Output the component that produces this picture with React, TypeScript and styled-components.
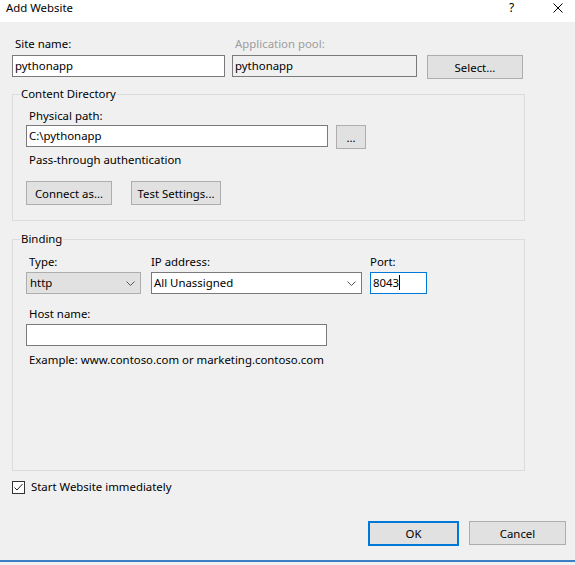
import React from 'react'
import styled, { createGlobalStyle, css } from 'styled-components'

const GlobalStyle = createGlobalStyle`
	html, body {
		margin: 0;
		padding: 0;
		background: #f0f0f0;
	}
	body {
		font-family: 'Noto Sans', 'Segoe UI', sans-serif;
		font-size: 11.4px;
		color: #000;
	}
`

const Window = styled.div`
	width: 575px;
	height: 562px;
	box-sizing: border-box;
	display: flex;
	flex-direction: column;
	background: #f0f0f0;
	border-bottom: 2px solid #3b7fc4;
`

const TitleBar = styled.div`
	height: 22px;
	background: #fff;
	display: flex;
	align-items: flex-start;
	flex-shrink: 0;
`

const Title = styled.div`
	padding: 0 0 0 6px;
	line-height: 16px;
`

const HelpGlyph = styled.div`
	margin-left: auto;
	line-height: 16px;
	font-size: 12px;
	width: 6px;
`

const CloseGlyph = styled.svg`
	margin: 3px 12px 0 38px;
`

const Body = styled.div`
	padding: 14px 0 0 12px;
	display: flex;
	flex-direction: column;
	flex: 1;
`

const Row = styled.div<{ $mt?: number }>`
	display: flex;
	align-items: flex-start;
	margin-top: ${(p) => p.$mt ?? 0}px;
`

const Field = styled.div<{ $ml?: number; $mt?: number }>`
	display: flex;
	flex-direction: column;
	margin-left: ${(p) => p.$ml ?? 0}px;
	margin-top: ${(p) => p.$mt ?? 0}px;
`

const Label = styled.div<{ $disabled?: boolean; $gap?: number; $indent?: number }>`
	line-height: 16px;
	height: 16px;
	padding-left: ${(p) => p.$indent ?? 3}px;
	margin-bottom: ${(p) => p.$gap ?? 2}px;
	color: ${(p) => (p.$disabled ? '#9d9d9d' : '#000')};
	white-space: nowrap;
`

const fieldBox = css`
	height: 22px;
	box-sizing: border-box;
	line-height: 20px;
	padding: 0 2px;
	white-space: nowrap;
	overflow: hidden;
`

const TextBox = styled.div<{ $w: number; $disabled?: boolean; $focused?: boolean }>`
	${fieldBox};
	width: ${(p) => p.$w}px;
	background: ${(p) => (p.$disabled ? '#f0f0f0' : '#fff')};
	border: 1px solid ${(p) => (p.$focused ? '#0078d7' : '#7a7a7a')};
`

const Caret = styled.span`
	display: inline-block;
	width: 1px;
	height: 15px;
	background: #000;
	vertical-align: -3px;
`

const Combo = styled.div<{ $w: number; $grey?: boolean }>`
	${fieldBox};
	width: ${(p) => p.$w}px;
	display: flex;
	align-items: center;
	justify-content: space-between;
	padding: 0 5px 0 ${(p) => (p.$grey ? 3 : 2)}px;
	background: ${(p) => (p.$grey ? '#e1e1e1' : '#fff')};
	border: 1px solid ${(p) => (p.$grey ? '#adadad' : '#7a7a7a')};
`

const Button = styled.div<{ $w: number; $ml?: number; $default?: boolean }>`
	width: ${(p) => p.$w}px;
	height: ${(p) => (p.$default ? 25 : 24)}px;
	margin-left: ${(p) => p.$ml ?? 0}px;
	box-sizing: border-box;
	display: flex;
	align-items: center;
	justify-content: center;
	background: #e1e1e1;
	border: ${(p) => (p.$default ? '2px solid #0078d7' : '1px solid #adadad')};
	white-space: nowrap;
`

const Group = styled.fieldset<{ $mt: number; $h?: number }>`
	width: 513px;
	box-sizing: border-box;
	margin: ${(p) => p.$mt}px 0 0 0;
	padding: 0;
	border: 1px solid #dcdcdc;
	min-inline-size: 0;
	${(p) => (p.$h ? `height: ${p.$h}px;` : '')}
`

const Legend = styled.legend`
	margin-left: 7px;
	padding: 0 1px;
	line-height: 16px;
`

const GroupBody = styled.div<{ $pt: number; $pb?: number }>`
	padding: ${(p) => p.$pt}px 0 ${(p) => p.$pb ?? 0}px 13px;
	display: flex;
	flex-direction: column;
`

const Text = styled.div<{ $mt: number }>`
	margin-top: ${(p) => p.$mt}px;
	padding-left: 3px;
	line-height: 16px;
	white-space: nowrap;
`

const CheckRow = styled.label`
	display: flex;
	align-items: center;
	gap: 6px;
	margin-top: 8px;
	line-height: 16px;
`

const CheckBox = styled.span`
	width: 13px;
	height: 13px;
	box-sizing: border-box;
	border: 1px solid #333;
	background: #fff;
	display: flex;
`

const Footer = styled.div`
	display: flex;
	justify-content: flex-end;
	padding-right: 9px;
	margin-top: 26px;
`

const Chevron = () => (
	<svg width="9" height="5" viewBox="0 0 9 5">
		<polyline points="0.5,0.5 4.5,4.5 8.5,0.5" fill="none" stroke="#555" strokeWidth="1" />
	</svg>
)

export default function App() {
	return (
		<>
			<GlobalStyle />
			<Window>
				<TitleBar>
					<Title>Add Website</Title>
					<HelpGlyph>?</HelpGlyph>
					<CloseGlyph width="10" height="10" viewBox="0 0 10 10">
						<path d="M0.5 0.5 L9.5 9.5 M9.5 0.5 L0.5 9.5" stroke="#000" strokeWidth="1" />
					</CloseGlyph>
				</TitleBar>
				<Body>
					<Row>
						<Field>
							<Label $gap={3}>Site name:</Label>
							<TextBox $w={213}>pythonapp</TextBox>
						</Field>
						<Field $ml={7}>
							<Label $gap={3} $disabled>
								Application pool:
							</Label>
							<TextBox $w={185} $disabled>
								pythonapp
							</TextBox>
						</Field>
						<Field $ml={10}>
							<Label $gap={3} />
							<Button $w={96}>Select...</Button>
						</Field>
					</Row>

					<Group $mt={7}>
						<Legend>Content Directory</Legend>
						<GroupBody $pt={6} $pb={15}>
							<Label $gap={1}>Physical path:</Label>
							<Row>
								<TextBox $w={302}>C:\pythonapp</TextBox>
								<Button $w={30} $ml={8}>
									...
								</Button>
							</Row>
							<Text $mt={3}>Pass-through authentication</Text>
							<Row $mt={13}>
								<Button $w={86}>Connect as...</Button>
								<Button $w={90} $ml={19}>
									Test Settings...
								</Button>
							</Row>
						</GroupBody>
					</Group>

					<Group $mt={10} $h={240}>
						<Legend>Binding</Legend>
						<GroupBody $pt={7}>
							<Row>
								<Field>
									<Label>Type:</Label>
									<Combo $w={115} $grey>
										<span>http</span>
										<Chevron />
									</Combo>
								</Field>
								<Field $ml={10}>
									<Label $indent={0}>IP address:</Label>
									<Combo $w={211}>
										<span>All Unassigned</span>
										<Chevron />
									</Combo>
								</Field>
								<Field $ml={8}>
									<Label $indent={0}>Port:</Label>
									<TextBox $w={57} $focused>
										8043
										<Caret />
									</TextBox>
								</Field>
							</Row>
							<Field $mt={12}>
								<Label>Host name:</Label>
								<TextBox $w={301} />
							</Field>
							<Text $mt={6}>Example: www.contoso.com or marketing.contoso.com</Text>
						</GroupBody>
					</Group>

					<CheckRow>
						<CheckBox>
							<svg width="11" height="11" viewBox="0 0 11 11">
								<polyline points="1.5,5.5 4,8 9.5,2" fill="none" stroke="#222" strokeWidth="1" />
							</svg>
						</CheckBox>
						Start Website immediately
					</CheckRow>

					<Footer>
						<Button $w={91} $default>
							OK
						</Button>
						<Button $w={97} $ml={10}>
							Cancel
						</Button>
					</Footer>
				</Body>
			</Window>
		</>
	)
}
